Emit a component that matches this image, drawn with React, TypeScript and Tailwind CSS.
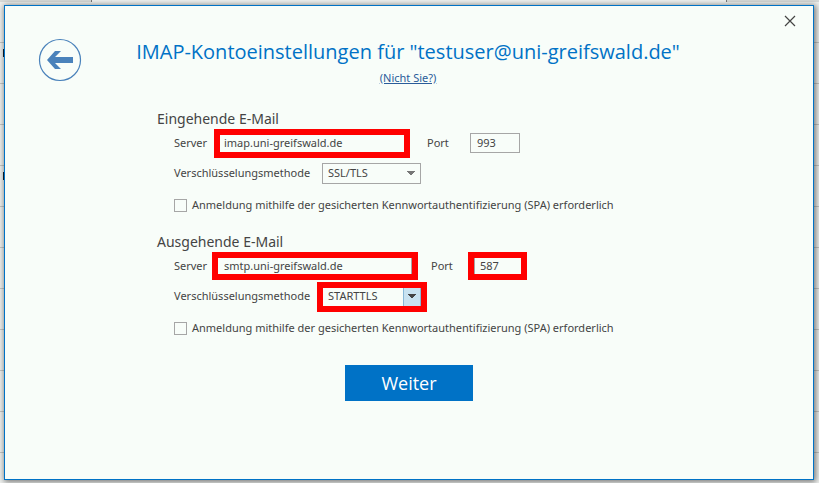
import { useState } from 'react';
import clsx from 'clsx';

interface MailServer {
  title: string;
  host: string;
  port: string;
  encryption: string;
}

interface ServerSectionProps {
  id: string;
  server: MailServer;
  outgoing?: boolean;
}

const methods = ['SSL/TLS', 'STARTTLS', 'Auto', 'Keine'];

const incoming: MailServer = {
  title: 'Eingehende E-Mail',
  host: 'imap.uni-greifswald.de',
  port: '993',
  encryption: 'SSL/TLS',
};

const outgoingServer: MailServer = {
  title: 'Ausgehende E-Mail',
  host: 'smtp.uni-greifswald.de',
  port: '587',
  encryption: 'STARTTLS',
};

function ServerSection({ id, server, outgoing }: ServerSectionProps) {
  const [host, setHost] = useState(server.host);
  const [port, setPort] = useState(server.port);
  const [encryption, setEncryption] = useState(server.encryption);
  const [spa, setSpa] = useState(false);

  return (
    <section>
      <h2 className="h-5 text-[14px] leading-5">{server.title}</h2>

      <div className="flex h-[29px] items-center pl-[17px]">
        <label htmlFor={`${id}-host`} className={outgoing ? 'w-[38px]' : 'w-10'}>
          Server
        </label>
        <input
          id={`${id}-host`}
          value={host}
          onChange={(e) => setHost(e.target.value)}
          className={clsx(
            'border-6 border-[#ff0000] bg-[#f8fdf9] pb-0.5 outline-none',
            outgoing ? 'h-7 w-[206px] pl-1.5 shadow-[inset_-1px_0_0_#a6a6a6]' : 'h-[29px] w-[196px] pl-1'
          )}
        />
        <label htmlFor={`${id}-port`} className={outgoing ? 'ml-[13px] w-[37px]' : 'ml-[17px] w-[43px]'}>
          Port
        </label>
        <input
          id={`${id}-port`}
          value={port}
          onChange={(e) => setPort(e.target.value)}
          className={clsx(
            'bg-[#f8fdf9] pb-0.5 pl-1.5 outline-none',
            outgoing
              ? 'h-7 w-[59px] border-6 border-[#ff0000] shadow-[inset_1px_0_0_#a6a6a6]'
              : 'h-5 w-[50px] border border-[#a6a6a6]'
          )}
        />
      </div>

      <div className="flex h-8 items-center pl-[17px]">
        <label htmlFor={`${id}-method`} className={outgoing ? 'w-[143px]' : 'w-[148px]'}>
          Verschlüsselungsmethode
        </label>
        <div
          className={clsx(
            'relative',
            outgoing ? 'h-[30px] w-[110px] border-6 border-[#ff0000]' : 'h-[21px] w-[99px] border border-[#a6a6a6]'
          )}
        >
          <select
            id={`${id}-method`}
            value={encryption}
            onChange={(e) => setEncryption(e.target.value)}
            className="block h-full w-full appearance-none bg-[#f8fdf9] pl-[5px] outline-none"
          >
            {methods.map((method) => (
              <option key={method}>{method}</option>
            ))}
          </select>
          <span
            className={clsx(
              'pointer-events-none absolute inset-y-0 right-0 flex w-[18px] items-center justify-center pb-0.5',
              outgoing && 'border-x border-[#88b8d8] bg-[#c8e2f0] text-[#444]',
              !outgoing && 'text-[#777]'
            )}
          >
            <svg width="8" height="4" viewBox="0 0 8 4" fill="currentColor" shapeRendering="crispEdges">
              <path d="M0 0h8v1H7v1H6v1H5v1H3V3H2V2H1V1H0z" />
            </svg>
          </span>
        </div>
      </div>

      <label className="flex h-8 items-center gap-[5px] pl-[17px]">
        <input
          type="checkbox"
          checked={spa}
          onChange={(e) => setSpa(e.target.checked)}
          className="size-[13px] shrink-0 appearance-none border border-[#a6a6a6] checked:bg-[#0072c6]"
        />
        Anmeldung mithilfe der gesicherten Kennwortauthentifizierung (SPA) erforderlich
      </label>
    </section>
  );
}

// Window behind the dialog, only its edges are visible
function Backdrop() {
  return (
    <div className="absolute inset-0 overflow-hidden bg-[#f0f2f0]" aria-hidden="true">
      <div className="flex h-[2px]">
        <div className="w-[92px] border-r border-[#777] bg-[#d8dad8]" />
        <div className="flex-1" />
        <div className="w-[93px] border-l border-[#777] bg-[#d8dad8]" />
      </div>
      {Array.from({ length: 12 }, (_, i) => (
        <div key={i} className="h-[41px] border-b border-[#c6c8c6] pt-1.5 pl-[3px]">
          {(i === 1 || i === 4) && <div className="h-2 w-px bg-[#123]" />}
        </div>
      ))}
    </div>
  );
}

export default function App() {
  return (
    <div className="relative flex min-h-screen pt-[5px] pr-[5px] pb-[3px] pl-1 font-['Noto_Sans','Open_Sans',sans-serif] text-[11px] text-[#444]">
      <Backdrop />
      <main className="relative flex flex-1 flex-col border border-[#0072c6] bg-[#f8fdf9] shadow-[1px_1px_6px_1px_rgba(0,0,0,0.5)]">
        <header className="flex items-start">
          <button type="button" aria-label="Zurück" className="mt-8 ml-[33px] text-[#4a82bb]">
            <svg width="44" height="44" viewBox="0 0 44 44" fill="none">
              <circle cx="22" cy="22" r="20.5" stroke="currentColor" strokeWidth="1.2" />
              <path d="M9 22l8-9h6l-6 6h18v6H17l6 6h-6z" fill="currentColor" />
            </svg>
          </button>
          <div className="flex-1 pt-[30px] text-center">
            <h1 className="mb-0.5 font-['Open_Sans','Noto_Sans',sans-serif] text-[20px] leading-8 text-[#0072c6]">
              IMAP-Kontoeinstellungen für "testuser@uni-greifswald.de"
            </h1>
            <a href="#" className="text-[#2a5c9a] underline">
              (Nicht Sie?)
            </a>
          </div>
          <button type="button" aria-label="Schließen" className="mt-2 mr-4 ml-[49px] p-px text-[#444]">
            <svg width="12" height="12" viewBox="0 0 12 12" stroke="currentColor" strokeWidth="1.2">
              <path d="M1 1l10 10M11 1L1 11" />
            </svg>
          </button>
        </header>

        <form className="flex flex-col" onSubmit={(e) => e.preventDefault()}>
          <div className="mx-auto flex w-[504px] flex-col gap-2.5 pt-[22px]">
            <ServerSection id="incoming" server={incoming} />
            <ServerSection id="outgoing" server={outgoingServer} outgoing />
          </div>
          <button type="submit" className="mx-auto mt-5 h-9 w-32 bg-[#0072c6] pt-0.5 font-['Open_Sans','Noto_Sans',sans-serif] text-[18px] text-white">
            Weiter
          </button>
        </form>
      </main>
    </div>
  );
}
